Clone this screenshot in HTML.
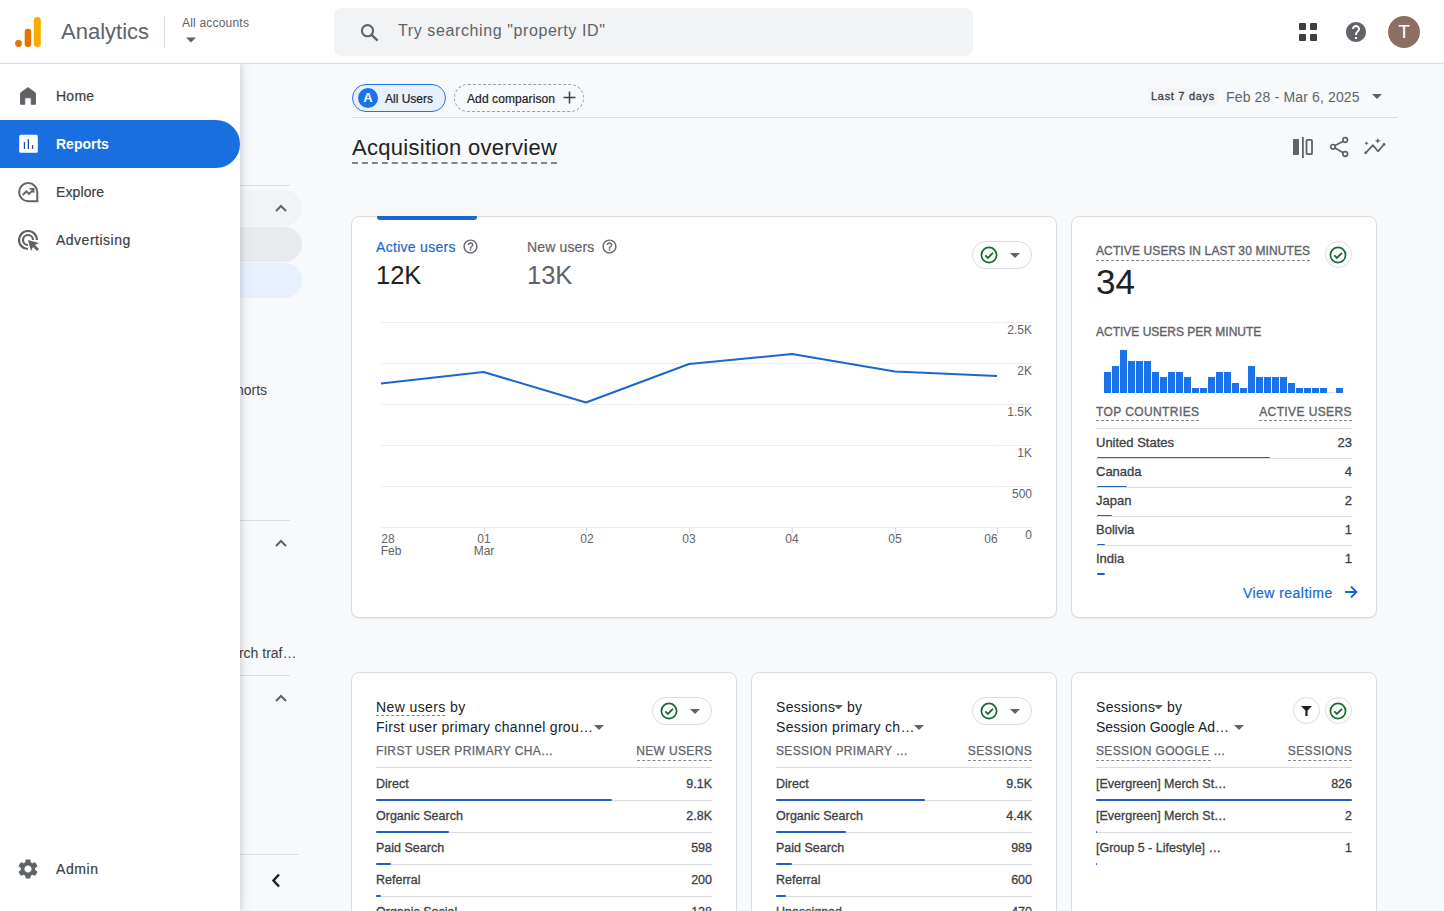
<!DOCTYPE html>
<html><head><meta charset="utf-8">
<style>
*{box-sizing:border-box;margin:0;padding:0}
html,body{width:1444px;height:911px;overflow:hidden;background:#f8f9fa;font-family:"Liberation Sans",sans-serif;color:#202124}
.abs{position:absolute}
#hdr{position:absolute;left:0;top:0;width:1444px;height:64px;background:#fff;border-bottom:1px solid #dadce0;z-index:5}
#nav{position:absolute;left:0;top:64px;width:240px;height:847px;background:#fff;z-index:4;box-shadow:0 0 12px rgba(60,64,67,.15),2px 0 4px rgba(60,64,67,.1)}
.nt{position:absolute;left:56px;font-size:14px;color:#3c4043;white-space:nowrap;line-height:16px;-webkit-text-stroke:.2px #3c4043}
.t{position:absolute;white-space:nowrap;line-height:1}
.card{position:absolute;background:#fff;border:1px solid #dadce0;border-radius:8px;box-shadow:0 1px 1px rgba(60,64,67,.08)}
.cap{font-size:12px;letter-spacing:.9px;color:#5f6368;text-transform:uppercase;-webkit-text-stroke:.35px #5f6368}
.dash{border-bottom:1px dashed #80868b}
.row{position:absolute;font-size:13px;color:#3c4043;-webkit-text-stroke:.3px #3c4043}
.ln{position:absolute;height:1px;background:#dadce0}
.bar{position:absolute;height:2px;background:#1f60c0;border-radius:1px}
.hd{font-size:14px;color:#202124;line-height:16px;letter-spacing:.3px}
.cap2{font-size:12px;line-height:14px;letter-spacing:.35px;color:#5f6368;text-transform:uppercase;-webkit-text-stroke:.25px #5f6368}
.r{position:absolute;font-size:12.5px;line-height:14px;color:#3c4043;white-space:nowrap;-webkit-text-stroke:.3px #3c4043}
</style></head>
<body>
<!-- HEADER -->
<div id="hdr">
  <svg class="abs" style="left:15px;top:17px" width="27" height="31" viewBox="0 0 27 31">
    <rect x="18.8" y="0" width="7" height="30" rx="3.5" fill="#f9ab00"/>
    <rect x="9.7" y="11.8" width="6.5" height="18.2" rx="3.25" fill="#e37400"/>
    <circle cx="3.5" cy="26.5" r="3.4" fill="#e37400"/>
  </svg>
  <div class="t" style="left:61px;top:21px;font-size:22px;color:#5f6368;line-height:22px">Analytics</div>
  <div class="abs" style="left:164px;top:16px;width:1px;height:32px;background:#dadce0"></div>
  <div class="t" style="left:182px;top:16px;font-size:12px;color:#5f6368;line-height:14px;letter-spacing:.2px">All accounts</div>
  <svg class="abs" style="left:186px;top:37px" width="10" height="6" viewBox="0 0 10 5"><path d="M0 0h10L5 5z" fill="#5f6368"/></svg>
  <div class="abs" style="left:334px;top:8px;width:639px;height:48px;background:#f1f3f4;border-radius:8px"></div>
  <svg class="abs" style="left:358px;top:22px" width="22" height="20" viewBox="0 0 22 20"><circle cx="9.5" cy="8.7" r="5.6" stroke="#5f6368" stroke-width="2.1" fill="none"/><path d="M13.6 12.8L19.6 18.6" stroke="#5f6368" stroke-width="2.3"/></svg>
  <div class="t" style="left:398px;top:22px;font-size:16px;color:#5f6368;line-height:18px;letter-spacing:.6px">Try searching "property ID"</div>
  <!-- apps -->
  <svg class="abs" style="left:1299px;top:23px" width="18" height="18" viewBox="0 0 18 18">
    <rect x="0" y="0" width="7" height="7" rx="1" fill="#3c4043"/><rect x="11" y="0" width="7" height="7" rx="1" fill="#3c4043"/>
    <rect x="0" y="11" width="7" height="7" rx="1" fill="#3c4043"/><rect x="11" y="11" width="7" height="7" rx="1" fill="#3c4043"/>
  </svg>
  <svg class="abs" style="left:1344px;top:20px" width="24" height="24" viewBox="0 0 24 24"><path fill="#5f6368" d="M12 2C6.48 2 2 6.48 2 12s4.48 10 10 10 10-4.48 10-10S17.52 2 12 2zm1 17h-2v-2h2v2zm2.07-7.75l-.9.92C13.45 12.9 13 13.5 13 15h-2v-.5c0-1.1.45-2.1 1.17-2.83l1.24-1.26c.37-.36.59-.86.59-1.41 0-1.1-.9-2-2-2s-2 .9-2 2H8c0-2.21 1.79-4 4-4s4 1.79 4 4c0 .88-.36 1.68-.93 2.25z"/></svg>
  <div class="abs" style="left:1388px;top:16px;width:32px;height:32px;border-radius:50%;background:#8d6e63;color:#fff;font-size:19px;text-align:center;line-height:32px">T</div>
</div>

<!-- SECONDARY NAV (behind) -->
<div class="abs" style="left:240px;top:185px;width:50px;height:1px;background:#dadce0"></div>
<div class="abs" style="left:200px;top:190px;width:102px;height:36px;border-radius:0 18px 18px 0;background:#f1f3f4"></div>
<svg class="abs" style="left:275px;top:204px" width="12" height="8" viewBox="0 0 12 8"><path d="M1 7l5-5 5 5" stroke="#5f6368" stroke-width="2" fill="none"/></svg>
<div class="abs" style="left:200px;top:227px;width:102px;height:35px;border-radius:0 18px 18px 0;background:#e8eaed"></div>
<div class="abs" style="left:200px;top:263px;width:102px;height:35px;border-radius:0 18px 18px 0;background:#e8f0fe"></div>
<div class="t" style="left:218px;top:382px;font-size:14px;color:#3c4043;line-height:16px">Cohorts</div>
<div class="abs" style="left:240px;top:520px;width:50px;height:1px;background:#dadce0"></div>
<svg class="abs" style="left:275px;top:539px" width="12" height="8" viewBox="0 0 12 8"><path d="M1 7l5-5 5 5" stroke="#5f6368" stroke-width="2" fill="none"/></svg>
<div class="t" style="left:214px;top:645px;font-size:14px;color:#3c4043;line-height:16px">Search traf…</div>
<div class="abs" style="left:240px;top:675px;width:50px;height:1px;background:#dadce0"></div>
<svg class="abs" style="left:275px;top:694px" width="12" height="8" viewBox="0 0 12 8"><path d="M1 7l5-5 5 5" stroke="#5f6368" stroke-width="2" fill="none"/></svg>
<div class="abs" style="left:240px;top:854px;width:59px;height:1px;background:#dadce0"></div>
<svg class="abs" style="left:271px;top:873px" width="10" height="15" viewBox="0 0 10 15"><path d="M8 1.5L2.5 7.5 8 13.5" stroke="#202124" stroke-width="2.5" fill="none"/></svg>

<!-- LEFT NAV -->
<div id="nav">
  <svg class="abs" style="left:19px;top:23px" width="18" height="18" viewBox="0 0 18 18"><path d="M9 .6L1.5 6v11.3h4.3v-6.5h6.4v6.5h4.3V6z" fill="#5f6368" stroke="#5f6368" stroke-width=".9" stroke-linejoin="round"/></svg>
  <div class="nt" style="top:24px;letter-spacing:.25px">Home</div>
  <div class="abs" style="left:0;top:56px;width:240px;height:48px;background:#1a6fe0;border-radius:0 24px 24px 0"></div>
  <svg class="abs" style="left:19px;top:70px" width="19" height="19" viewBox="0 0 19 19"><rect x="0.2" y="0.8" width="18.6" height="18" rx="1.5" fill="#fff"/><rect x="4.8" y="7.9" width="1.3" height="7.1" rx=".6" fill="#1f4f9a"/><rect x="8.7" y="4.9" width="1.3" height="10.1" rx=".6" fill="#1f4f9a"/><rect x="12.9" y="11.1" width="1.3" height="3.9" rx=".6" fill="#1f4f9a"/></svg>
  <div class="nt" style="top:72px;color:#fff;font-weight:bold;-webkit-text-stroke:0">Reports</div>
  <svg class="abs" style="left:18px;top:118px" width="21" height="21" viewBox="0 0 21 21"><path d="M10.2 19.3A9.1 9.1 0 1 1 19.3 10.2V19.3Z" stroke="#5f6368" stroke-width="2" fill="none" stroke-linejoin="miter"/><path d="M4.8 13l3.6-3.6 2.6 2.6 4.2-4.2" stroke="#5f6368" stroke-width="1.9" fill="none"/><path d="M11.6 6.9h3.9v3.9" stroke="#5f6368" stroke-width="1.9" fill="none"/></svg>
  <div class="nt" style="top:120px;letter-spacing:.1px">Explore</div>
  <svg class="abs" style="left:18px;top:166px" width="22" height="22" viewBox="0 0 22 22"><path d="M10 19a9 9 0 1 1 9-9" stroke="#5f6368" stroke-width="2.2" fill="none"/><path d="M10 15a5 5 0 1 1 5-5" stroke="#5f6368" stroke-width="2.2" fill="none"/><path d="M10 10l3 11 2-4 4 4 2-2-4-4 4-2z" fill="#5f6368"/></svg>
  <div class="nt" style="top:168px;letter-spacing:.5px">Advertising</div>
  <svg class="abs" style="left:16px;top:793px" width="24" height="24" viewBox="0 0 24 24"><path fill="#5f6368" d="M19.14 12.94c.04-.3.06-.61.06-.94 0-.32-.02-.64-.07-.94l2.03-1.58a.49.49 0 0 0 .12-.61l-1.92-3.32a.488.488 0 0 0-.59-.22l-2.39.96c-.5-.38-1.03-.7-1.62-.94l-.36-2.54a.484.484 0 0 0-.48-.41h-3.84c-.24 0-.43.17-.47.41l-.36 2.54c-.59.24-1.13.57-1.62.94l-2.39-.96c-.22-.08-.47 0-.59.22L2.74 8.87c-.12.21-.08.47.12.61l2.03 1.58c-.05.3-.09.63-.09.94s.02.64.07.94l-2.03 1.58a.49.49 0 0 0-.12.61l1.92 3.32c.12.22.37.29.59.22l2.39-.96c.5.38 1.03.7 1.62.94l.36 2.54c.05.24.24.41.48.41h3.84c.24 0 .44-.17.47-.41l.36-2.54c.59-.24 1.13-.56 1.62-.94l2.39.96c.22.08.47 0 .59-.22l1.92-3.32c.12-.22.07-.47-.12-.61l-2.01-1.58zM12 15.6c-1.98 0-3.6-1.62-3.6-3.6s1.62-3.6 3.6-3.6 3.6 1.62 3.6 3.6-1.62 3.6-3.6 3.6z"/></svg>
  <div class="nt" style="top:797px;letter-spacing:.6px">Admin</div>
</div>

<!-- MAIN CONTENT -->
<div id="main">
  <!-- comparison bar -->
  <div class="abs" style="left:352px;top:84px;width:94px;height:28px;border:1px solid #1a73e8;border-radius:14px;background:#e8f0fe"></div>
  <div class="abs" style="left:358px;top:88px;width:20px;height:20px;border-radius:50%;background:#1a73e8;color:#fff;font-size:13px;font-weight:bold;text-align:center;line-height:20px">A</div>
  <div class="t" style="left:385px;top:92px;font-size:12px;color:#202124;line-height:14px;-webkit-text-stroke:.2px #202124">All Users</div>
  <div class="abs" style="left:454px;top:84px;width:130px;height:28px;border:1px dashed #9aa0a6;border-radius:14px"></div>
  <div class="t" style="left:467px;top:92px;font-size:12px;color:#202124;line-height:14px;letter-spacing:.1px;-webkit-text-stroke:.2px #202124">Add comparison</div>
  <svg class="abs" style="left:563px;top:91px" width="13" height="13" viewBox="0 0 13 13"><path d="M6.5 .5v12M.5 6.5h12" stroke="#3c4043" stroke-width="1.5"/></svg>
  <div class="abs" style="left:1149px;top:88px;width:68px;height:17px;background:#f3f4f5;border-radius:2px"></div>
  <div class="t" style="left:1151px;top:90px;font-size:11px;color:#3c4043;letter-spacing:.7px;line-height:12px;-webkit-text-stroke:.3px #3c4043">Last 7 days</div>
  <div class="t" style="left:1226px;top:89px;font-size:14px;color:#5f6368;line-height:16px;letter-spacing:.15px">Feb 28 - Mar 6, 2025</div>
  <svg class="abs" style="left:1372px;top:94px" width="10" height="5" viewBox="0 0 10 5"><path d="M0 0h10L5 5z" fill="#5f6368"/></svg>
  <div class="abs" style="left:352px;top:117px;width:1046px;height:1px;background:#dadce0"></div>
  <!-- title -->
  <div class="t" style="left:352px;top:136px;font-size:22px;color:#202124;line-height:24px;letter-spacing:.29px">Acquisition overview</div>
  <div class="abs" style="left:352px;top:162px;width:205px;height:0;border-top:2px dashed #80868b"></div>
  <svg class="abs" style="left:1292px;top:137px" width="22" height="21" viewBox="0 0 22 21"><rect x="1" y="2" width="6" height="16" rx="1" fill="#5f6368"/><rect x="10" y="0" width="1.8" height="21" fill="#5f6368"/><rect x="14.5" y="2.8" width="5.5" height="14.4" rx="1" stroke="#5f6368" stroke-width="1.8" fill="none"/></svg>
  <svg class="abs" style="left:1328px;top:136px" width="22" height="22" viewBox="0 0 22 22"><circle cx="17.2" cy="4" r="2.3" stroke="#5f6368" stroke-width="1.7" fill="none"/><circle cx="5" cy="10.8" r="2.3" stroke="#5f6368" stroke-width="1.7" fill="none"/><circle cx="17.2" cy="18" r="2.3" stroke="#5f6368" stroke-width="1.7" fill="none"/><path d="M7 9.6l8.2-4.4M7 12l8.2 4.8" stroke="#5f6368" stroke-width="1.7"/></svg>
  <svg class="abs" style="left:1360px;top:135px" width="30" height="25" viewBox="0 0 30 25"><path d="M5.7 17.8L13 10.2L17.9 16.3L24 9.5" stroke="#5f6368" stroke-width="1.8" fill="none" stroke-linecap="round" stroke-linejoin="round"/><circle cx="5.7" cy="17.8" r="1.4" fill="#5f6368"/><circle cx="24" cy="9.5" r="1.4" fill="#5f6368"/><path d="M6.5 6.3Q6.8 8 8.5 8.3Q6.8 8.6 6.5 10.3Q6.2 8.6 4.5 8.3Q6.2 8 6.5 6.3Z" fill="#5f6368"/><path d="M17.8 2.9Q18.2 5.3 20.6 5.7Q18.2 6.1 17.8 8.5Q17.4 6.1 15 5.7Q17.4 5.3 17.8 2.9Z" fill="#5f6368"/></svg>

  <!-- CARD 1 -->
  <div class="card" style="left:351px;top:216px;width:706px;height:402px"></div>
  <div class="abs" style="left:377px;top:216px;width:100px;height:4px;background:#1967d2;border-radius:0 0 3px 3px"></div>
  <div class="t" style="left:376px;top:239px;font-size:14px;color:#1967d2;line-height:16px;letter-spacing:.3px;-webkit-text-stroke:.2px #1967d2">Active users</div>
  <svg class="abs" style="left:462px;top:238px" width="17" height="17" viewBox="0 0 24 24"><path fill="#5f6368" d="M11 18h2v-2h-2v2zm1-16C6.48 2 2 6.48 2 12s4.48 10 10 10 10-4.48 10-10S17.52 2 12 2zm0 18c-4.41 0-8-3.59-8-8s3.59-8 8-8 8 3.59 8 8-3.59 8-8 8zm0-14c-2.21 0-4 1.79-4 4h2c0-1.1.9-2 2-2s2 .9 2 2c0 2-3 1.75-3 5h2c0-2.25 3-2.5 3-5 0-2.21-1.79-4-4-4z"/></svg>
  <div class="t" style="left:376px;top:261px;font-size:25.5px;color:#202124;line-height:28px">12K</div>
  <div class="t" style="left:527px;top:239px;font-size:14px;color:#5f6368;line-height:16px;letter-spacing:.15px;-webkit-text-stroke:.2px #5f6368">New users</div>
  <svg class="abs" style="left:601px;top:238px" width="17" height="17" viewBox="0 0 24 24"><path fill="#5f6368" d="M11 18h2v-2h-2v2zm1-16C6.48 2 2 6.48 2 12s4.48 10 10 10 10-4.48 10-10S17.52 2 12 2zm0 18c-4.41 0-8-3.59-8-8s3.59-8 8-8 8 3.59 8 8-3.59 8-8 8zm0-14c-2.21 0-4 1.79-4 4h2c0-1.1.9-2 2-2s2 .9 2 2c0 2-3 1.75-3 5h2c0-2.25 3-2.5 3-5 0-2.21-1.79-4-4-4z"/></svg>
  <div class="t" style="left:527px;top:261px;font-size:25.5px;color:#5f6368;line-height:28px">13K</div>
  <div class="abs" style="left:972px;top:241px;width:60px;height:28px;border:1px solid #dadce0;border-radius:14px"></div>
  <svg class="abs" style="left:979px;top:245px" width="20" height="20" viewBox="0 0 20 20"><circle cx="10" cy="10" r="7.6" stroke="#146c2e" stroke-width="1.7" fill="none"/><path d="M6.3 10.3l2.6 2.6 5-5" stroke="#146c2e" stroke-width="1.8" fill="none"/></svg>
  <svg class="abs" style="left:1010px;top:253px" width="10" height="5" viewBox="0 0 10 5"><path d="M0 0h10L5 5z" fill="#5f6368"/></svg>
  <svg class="abs" style="left:351px;top:300px" width="706" height="280" viewBox="351 300 706 280">
    <g stroke="#ebedf0" stroke-width="1">
      <path d="M381 322.5H1032M381 363.5H1032M381 404.5H1032M381 445.5H1032M381 486.5H1032M381 527.5H1032"/>
      <path d="M484.5 527V533M586.5 527V533M689.5 527V533M792.5 527V533M895.5 527V533M997.5 527V533" stroke="#dadce0"/>
      <path d="M998 322.5H1001M998 363.5H1001M998 404.5H1001M998 445.5H1001M998 486.5H1001M998 527.5H1001" stroke="#fff" stroke-opacity=".7" stroke-width="1.2"/>
    </g>
    <path d="M381 383.5L483.5 372L586 402.5L689 364L792 354L895 371.5L997 376" stroke="#1967d2" stroke-width="2" fill="none" stroke-linejoin="round"/>
    <g font-family="Liberation Sans" font-size="12" fill="#5f6368" text-anchor="end">
      <text x="1032" y="334">2.5K</text><text x="1032" y="375">2K</text><text x="1032" y="416">1.5K</text>
      <text x="1032" y="457">1K</text><text x="1032" y="498">500</text><text x="1032" y="539">0</text>
    </g>
    <g font-family="Liberation Sans" font-size="12" fill="#5f6368" text-anchor="middle">
      <text x="388" y="543">28</text><text x="391" y="555">Feb</text>
      <text x="484" y="543">01</text><text x="484" y="555">Mar</text>
      <text x="587" y="543">02</text><text x="689" y="543">03</text><text x="792" y="543">04</text><text x="895" y="543">05</text><text x="991" y="543">06</text>
    </g>
  </svg>

  <!-- CARD 2 realtime -->
  <div class="card" style="left:1071px;top:216px;width:306px;height:402px"></div>
  <div class="t cap" style="left:1096px;top:245px;line-height:13px;font-size:12px;letter-spacing:.12px">Active users in last 30 minutes</div>
  <div class="abs" style="left:1096px;top:260px;width:214px;border-top:1px dashed #80868b"></div>
  <div class="abs" style="left:1325px;top:241px;width:27px;height:27px;border:1px solid #dadce0;border-radius:50%"></div>
  <svg class="abs" style="left:1328px;top:245px" width="20" height="20" viewBox="0 0 20 20"><circle cx="10" cy="10" r="7.6" stroke="#146c2e" stroke-width="1.7" fill="none"/><path d="M6.3 10.3l2.6 2.6 5-5" stroke="#146c2e" stroke-width="1.8" fill="none"/></svg>
  <div class="t" style="left:1096px;top:264px;font-size:35px;color:#202124;line-height:36px">34</div>
  <div class="t cap" style="left:1096px;top:326px;line-height:13px;font-size:12px;letter-spacing:0px">Active users per minute</div>
  <svg class="abs" style="left:1100px;top:340px" width="250" height="56" viewBox="1100 340 250 56" id="rtbars"><rect x="1104" y="372" width="7" height="21" fill="#1a73e8"/><rect x="1112" y="366" width="7" height="27" fill="#1a73e8"/><rect x="1120" y="350" width="7" height="43" fill="#1a73e8"/><rect x="1128" y="361" width="7" height="32" fill="#1a73e8"/><rect x="1136" y="361" width="7" height="32" fill="#1a73e8"/><rect x="1144" y="361" width="7" height="32" fill="#1a73e8"/><rect x="1152" y="372" width="7" height="21" fill="#1a73e8"/><rect x="1160" y="377" width="7" height="16" fill="#1a73e8"/><rect x="1168" y="372" width="7" height="21" fill="#1a73e8"/><rect x="1176" y="372" width="7" height="21" fill="#1a73e8"/><rect x="1184" y="377" width="7" height="16" fill="#1a73e8"/><rect x="1192" y="388" width="7" height="5" fill="#1a73e8"/><rect x="1200" y="388" width="7" height="5" fill="#1a73e8"/><rect x="1208" y="377" width="7" height="16" fill="#1a73e8"/><rect x="1216" y="372" width="7" height="21" fill="#1a73e8"/><rect x="1224" y="372" width="7" height="21" fill="#1a73e8"/><rect x="1232" y="383" width="7" height="10" fill="#1a73e8"/><rect x="1240" y="388" width="7" height="5" fill="#1a73e8"/><rect x="1248" y="366" width="7" height="27" fill="#1a73e8"/><rect x="1256" y="377" width="7" height="16" fill="#1a73e8"/><rect x="1264" y="377" width="7" height="16" fill="#1a73e8"/><rect x="1272" y="377" width="7" height="16" fill="#1a73e8"/><rect x="1280" y="377" width="7" height="16" fill="#1a73e8"/><rect x="1288" y="383" width="7" height="10" fill="#1a73e8"/><rect x="1296" y="388" width="7" height="5" fill="#1a73e8"/><rect x="1304" y="388" width="7" height="5" fill="#1a73e8"/><rect x="1312" y="388" width="7" height="5" fill="#1a73e8"/><rect x="1320" y="388" width="7" height="5" fill="#1a73e8"/><rect x="1328" y="392" width="7" height="1" fill="#dadce0"/><rect x="1336" y="388" width="7" height="5" fill="#1a73e8"/></svg>
  <div class="t cap" style="left:1096px;top:406px;line-height:13px;font-size:12px;letter-spacing:.4px">Top countries</div>
  <div class="abs" style="left:1096px;top:420px;width:103px;border-top:1px dashed #80868b"></div>
  <div class="t cap" style="left:1152px;width:200px;text-align:right;top:406px;line-height:13px;font-size:12px;letter-spacing:.4px">Active users</div>
  <div class="abs" style="left:1259px;top:420px;width:93px;border-top:1px dashed #80868b"></div>
  <div class="ln" style="left:1096px;top:428px;width:256px"></div>
  <div class="row" style="left:1096px;top:436px;line-height:14px">United States</div><div class="row" style="left:1096px;top:436px;width:256px;text-align:right;line-height:14px">23</div>
  <div class="bar" style="left:1097px;top:457px;width:173px"></div><div class="ln" style="left:1096px;top:458px;width:256px"></div>
  <div class="row" style="left:1096px;top:465px;line-height:14px">Canada</div><div class="row" style="left:1096px;top:465px;width:256px;text-align:right;line-height:14px">4</div>
  <div class="bar" style="left:1097px;top:486px;width:30px"></div><div class="ln" style="left:1096px;top:487px;width:256px"></div>
  <div class="row" style="left:1096px;top:494px;line-height:14px">Japan</div><div class="row" style="left:1096px;top:494px;width:256px;text-align:right;line-height:14px">2</div>
  <div class="bar" style="left:1097px;top:515px;width:15px"></div><div class="ln" style="left:1096px;top:516px;width:256px"></div>
  <div class="row" style="left:1096px;top:523px;line-height:14px">Bolivia</div><div class="row" style="left:1096px;top:523px;width:256px;text-align:right;line-height:14px">1</div>
  <div class="bar" style="left:1097px;top:544px;width:8px"></div><div class="ln" style="left:1096px;top:545px;width:256px"></div>
  <div class="row" style="left:1096px;top:552px;line-height:14px">India</div><div class="row" style="left:1096px;top:552px;width:256px;text-align:right;line-height:14px">1</div>
  <div class="bar" style="left:1097px;top:573px;width:8px"></div>
  <div class="t" style="left:1243px;top:585px;font-size:14px;color:#1967d2;line-height:16px;letter-spacing:.45px;-webkit-text-stroke:.2px #1967d2">View realtime</div>
  <svg class="abs" style="left:1345px;top:585px" width="13" height="14" viewBox="0 0 13 14"><path d="M0 7h11.5M6 1.5L11.5 7 6 12.5" stroke="#1967d2" stroke-width="1.8" fill="none"/></svg>
</div>
<div id="bottom"><div class="card" style="left:351px;top:672px;width:386px;height:260px"></div>
<div class="t hd" style="left:376px;top:699px;letter-spacing:.4px">New users by</div><div class="abs" style="left:376px;top:715px;width:69px;border-top:1px dashed #80868b"></div>
<div class="t hd" style="left:376px;top:719px">First user primary channel grou…</div><svg class="abs" style="left:594px;top:725px" width="10" height="5.0" viewBox="0 0 10 5"><path d="M0 0h10L5 5z" fill="#5f6368"/></svg>
<div class="abs" style="left:652px;top:697px;width:60px;height:28px;border:1px solid #dadce0;border-radius:14px"></div><svg class="abs" style="left:659px;top:701px" width="20" height="20" viewBox="0 0 20 20"><circle cx="10" cy="10" r="7.6" stroke="#146c2e" stroke-width="1.7" fill="none"/><path d="M6.3 10.3l2.6 2.6 5-5" stroke="#146c2e" stroke-width="1.8" fill="none"/></svg><svg class="abs" style="left:690px;top:709px" width="10" height="5.0" viewBox="0 0 10 5"><path d="M0 0h10L5 5z" fill="#5f6368"/></svg>
<div class="t cap2" style="left:376px;top:744px">First user primary cha…</div>
<div class="t cap2" style="left:412px;width:300px;text-align:right;top:744px">New users</div>
<div class="abs" style="left:637px;top:760px;width:75px;border-top:1px dashed #80868b"></div>
<div class="ln" style="left:376px;top:767px;width:336px"></div>
<div class="r" style="left:376px;top:777px">Direct</div><div class="r" style="left:512px;width:200px;text-align:right;top:777px">9.1K</div>
<div class="ln" style="left:376px;top:800px;width:336px"></div>
<div class="bar" style="left:376px;top:799px;width:236px"></div>
<div class="r" style="left:376px;top:809px">Organic Search</div><div class="r" style="left:512px;width:200px;text-align:right;top:809px">2.8K</div>
<div class="ln" style="left:376px;top:832px;width:336px"></div>
<div class="bar" style="left:376px;top:831px;width:73px"></div>
<div class="r" style="left:376px;top:841px">Paid Search</div><div class="r" style="left:512px;width:200px;text-align:right;top:841px">598</div>
<div class="ln" style="left:376px;top:864px;width:336px"></div>
<div class="bar" style="left:376px;top:863px;width:15px"></div>
<div class="r" style="left:376px;top:873px">Referral</div><div class="r" style="left:512px;width:200px;text-align:right;top:873px">200</div>
<div class="ln" style="left:376px;top:896px;width:336px"></div>
<div class="bar" style="left:376px;top:895px;width:5px"></div>
<div class="r" style="left:376px;top:905px">Organic Social</div><div class="r" style="left:512px;width:200px;text-align:right;top:905px">128</div>
<div class="bar" style="left:376px;top:927px;width:3px"></div>
<div class="card" style="left:751px;top:672px;width:306px;height:260px"></div>
<div class="t hd" style="left:776px;top:699px">Sessions</div><svg class="abs" style="left:834px;top:705px" width="9" height="4.5" viewBox="0 0 10 5"><path d="M0 0h10L5 5z" fill="#5f6368"/></svg><div class="t hd" style="left:847px;top:699px">by</div>
<div class="t hd" style="left:776px;top:719px">Session primary ch…</div><svg class="abs" style="left:914px;top:725px" width="10" height="5.0" viewBox="0 0 10 5"><path d="M0 0h10L5 5z" fill="#5f6368"/></svg>
<div class="abs" style="left:972px;top:697px;width:60px;height:28px;border:1px solid #dadce0;border-radius:14px"></div><svg class="abs" style="left:979px;top:701px" width="20" height="20" viewBox="0 0 20 20"><circle cx="10" cy="10" r="7.6" stroke="#146c2e" stroke-width="1.7" fill="none"/><path d="M6.3 10.3l2.6 2.6 5-5" stroke="#146c2e" stroke-width="1.8" fill="none"/></svg><svg class="abs" style="left:1010px;top:709px" width="10" height="5.0" viewBox="0 0 10 5"><path d="M0 0h10L5 5z" fill="#5f6368"/></svg>
<div class="t cap2" style="left:776px;top:744px">Session primary …</div>
<div class="t cap2" style="left:732px;width:300px;text-align:right;top:744px">Sessions</div>
<div class="abs" style="left:968px;top:760px;width:64px;border-top:1px dashed #80868b"></div>
<div class="ln" style="left:776px;top:767px;width:256px"></div>
<div class="r" style="left:776px;top:777px">Direct</div><div class="r" style="left:832px;width:200px;text-align:right;top:777px">9.5K</div>
<div class="ln" style="left:776px;top:800px;width:256px"></div>
<div class="bar" style="left:776px;top:799px;width:149px"></div>
<div class="r" style="left:776px;top:809px">Organic Search</div><div class="r" style="left:832px;width:200px;text-align:right;top:809px">4.4K</div>
<div class="ln" style="left:776px;top:832px;width:256px"></div>
<div class="bar" style="left:776px;top:831px;width:70px"></div>
<div class="r" style="left:776px;top:841px">Paid Search</div><div class="r" style="left:832px;width:200px;text-align:right;top:841px">989</div>
<div class="ln" style="left:776px;top:864px;width:256px"></div>
<div class="bar" style="left:776px;top:863px;width:16px"></div>
<div class="r" style="left:776px;top:873px">Referral</div><div class="r" style="left:832px;width:200px;text-align:right;top:873px">600</div>
<div class="ln" style="left:776px;top:896px;width:256px"></div>
<div class="bar" style="left:776px;top:895px;width:10px"></div>
<div class="r" style="left:776px;top:905px">Unassigned</div><div class="r" style="left:832px;width:200px;text-align:right;top:905px">470</div>
<div class="bar" style="left:776px;top:927px;width:8px"></div>
<div class="card" style="left:1071px;top:672px;width:306px;height:260px"></div>
<div class="t hd" style="left:1096px;top:699px">Sessions</div><svg class="abs" style="left:1154px;top:705px" width="9" height="4.5" viewBox="0 0 10 5"><path d="M0 0h10L5 5z" fill="#5f6368"/></svg><div class="t hd" style="left:1167px;top:699px">by</div>
<div class="t hd" style="left:1096px;top:719px;letter-spacing:0">Session Google Ad…</div><svg class="abs" style="left:1234px;top:725px" width="10" height="5.0" viewBox="0 0 10 5"><path d="M0 0h10L5 5z" fill="#5f6368"/></svg>
<div class="abs" style="left:1293px;top:697px;width:27px;height:27px;border:1px solid #dadce0;border-radius:50%"></div><svg class="abs" style="left:1301px;top:706px" width="11" height="10" viewBox="0 0 11 10"><path d="M0 0h11L6.6 4.6V10H4.4V4.6z" fill="#202124"/></svg><div class="abs" style="left:1325px;top:697px;width:27px;height:27px;border:1px solid #dadce0;border-radius:50%"></div><svg class="abs" style="left:1328px;top:701px" width="20" height="20" viewBox="0 0 20 20"><circle cx="10" cy="10" r="7.6" stroke="#146c2e" stroke-width="1.7" fill="none"/><path d="M6.3 10.3l2.6 2.6 5-5" stroke="#146c2e" stroke-width="1.8" fill="none"/></svg>
<div class="t cap2" style="left:1096px;top:744px">Session Google …</div>
<div class="abs" style="left:1096px;top:760px;width:115px;border-top:1px dashed #80868b"></div>
<div class="t cap2" style="left:1052px;width:300px;text-align:right;top:744px">Sessions</div>
<div class="abs" style="left:1288px;top:760px;width:64px;border-top:1px dashed #80868b"></div>
<div class="ln" style="left:1096px;top:767px;width:256px"></div>
<div class="r" style="left:1096px;top:777px">[Evergreen] Merch St…</div><div class="r" style="left:1152px;width:200px;text-align:right;top:777px">826</div>
<div class="ln" style="left:1096px;top:800px;width:256px"></div>
<div class="bar" style="left:1096px;top:799px;width:256px"></div>
<div class="r" style="left:1096px;top:809px">[Evergreen] Merch St…</div><div class="r" style="left:1152px;width:200px;text-align:right;top:809px">2</div>
<div class="ln" style="left:1096px;top:832px;width:256px"></div>
<div class="bar" style="left:1096px;top:831px;width:1px"></div>
<div class="r" style="left:1096px;top:841px">[Group 5 - Lifestyle] …</div><div class="r" style="left:1152px;width:200px;text-align:right;top:841px">1</div>
<div class="bar" style="left:1096px;top:863px;width:1px"></div>
</div><!--/bottom-->
</body></html>
